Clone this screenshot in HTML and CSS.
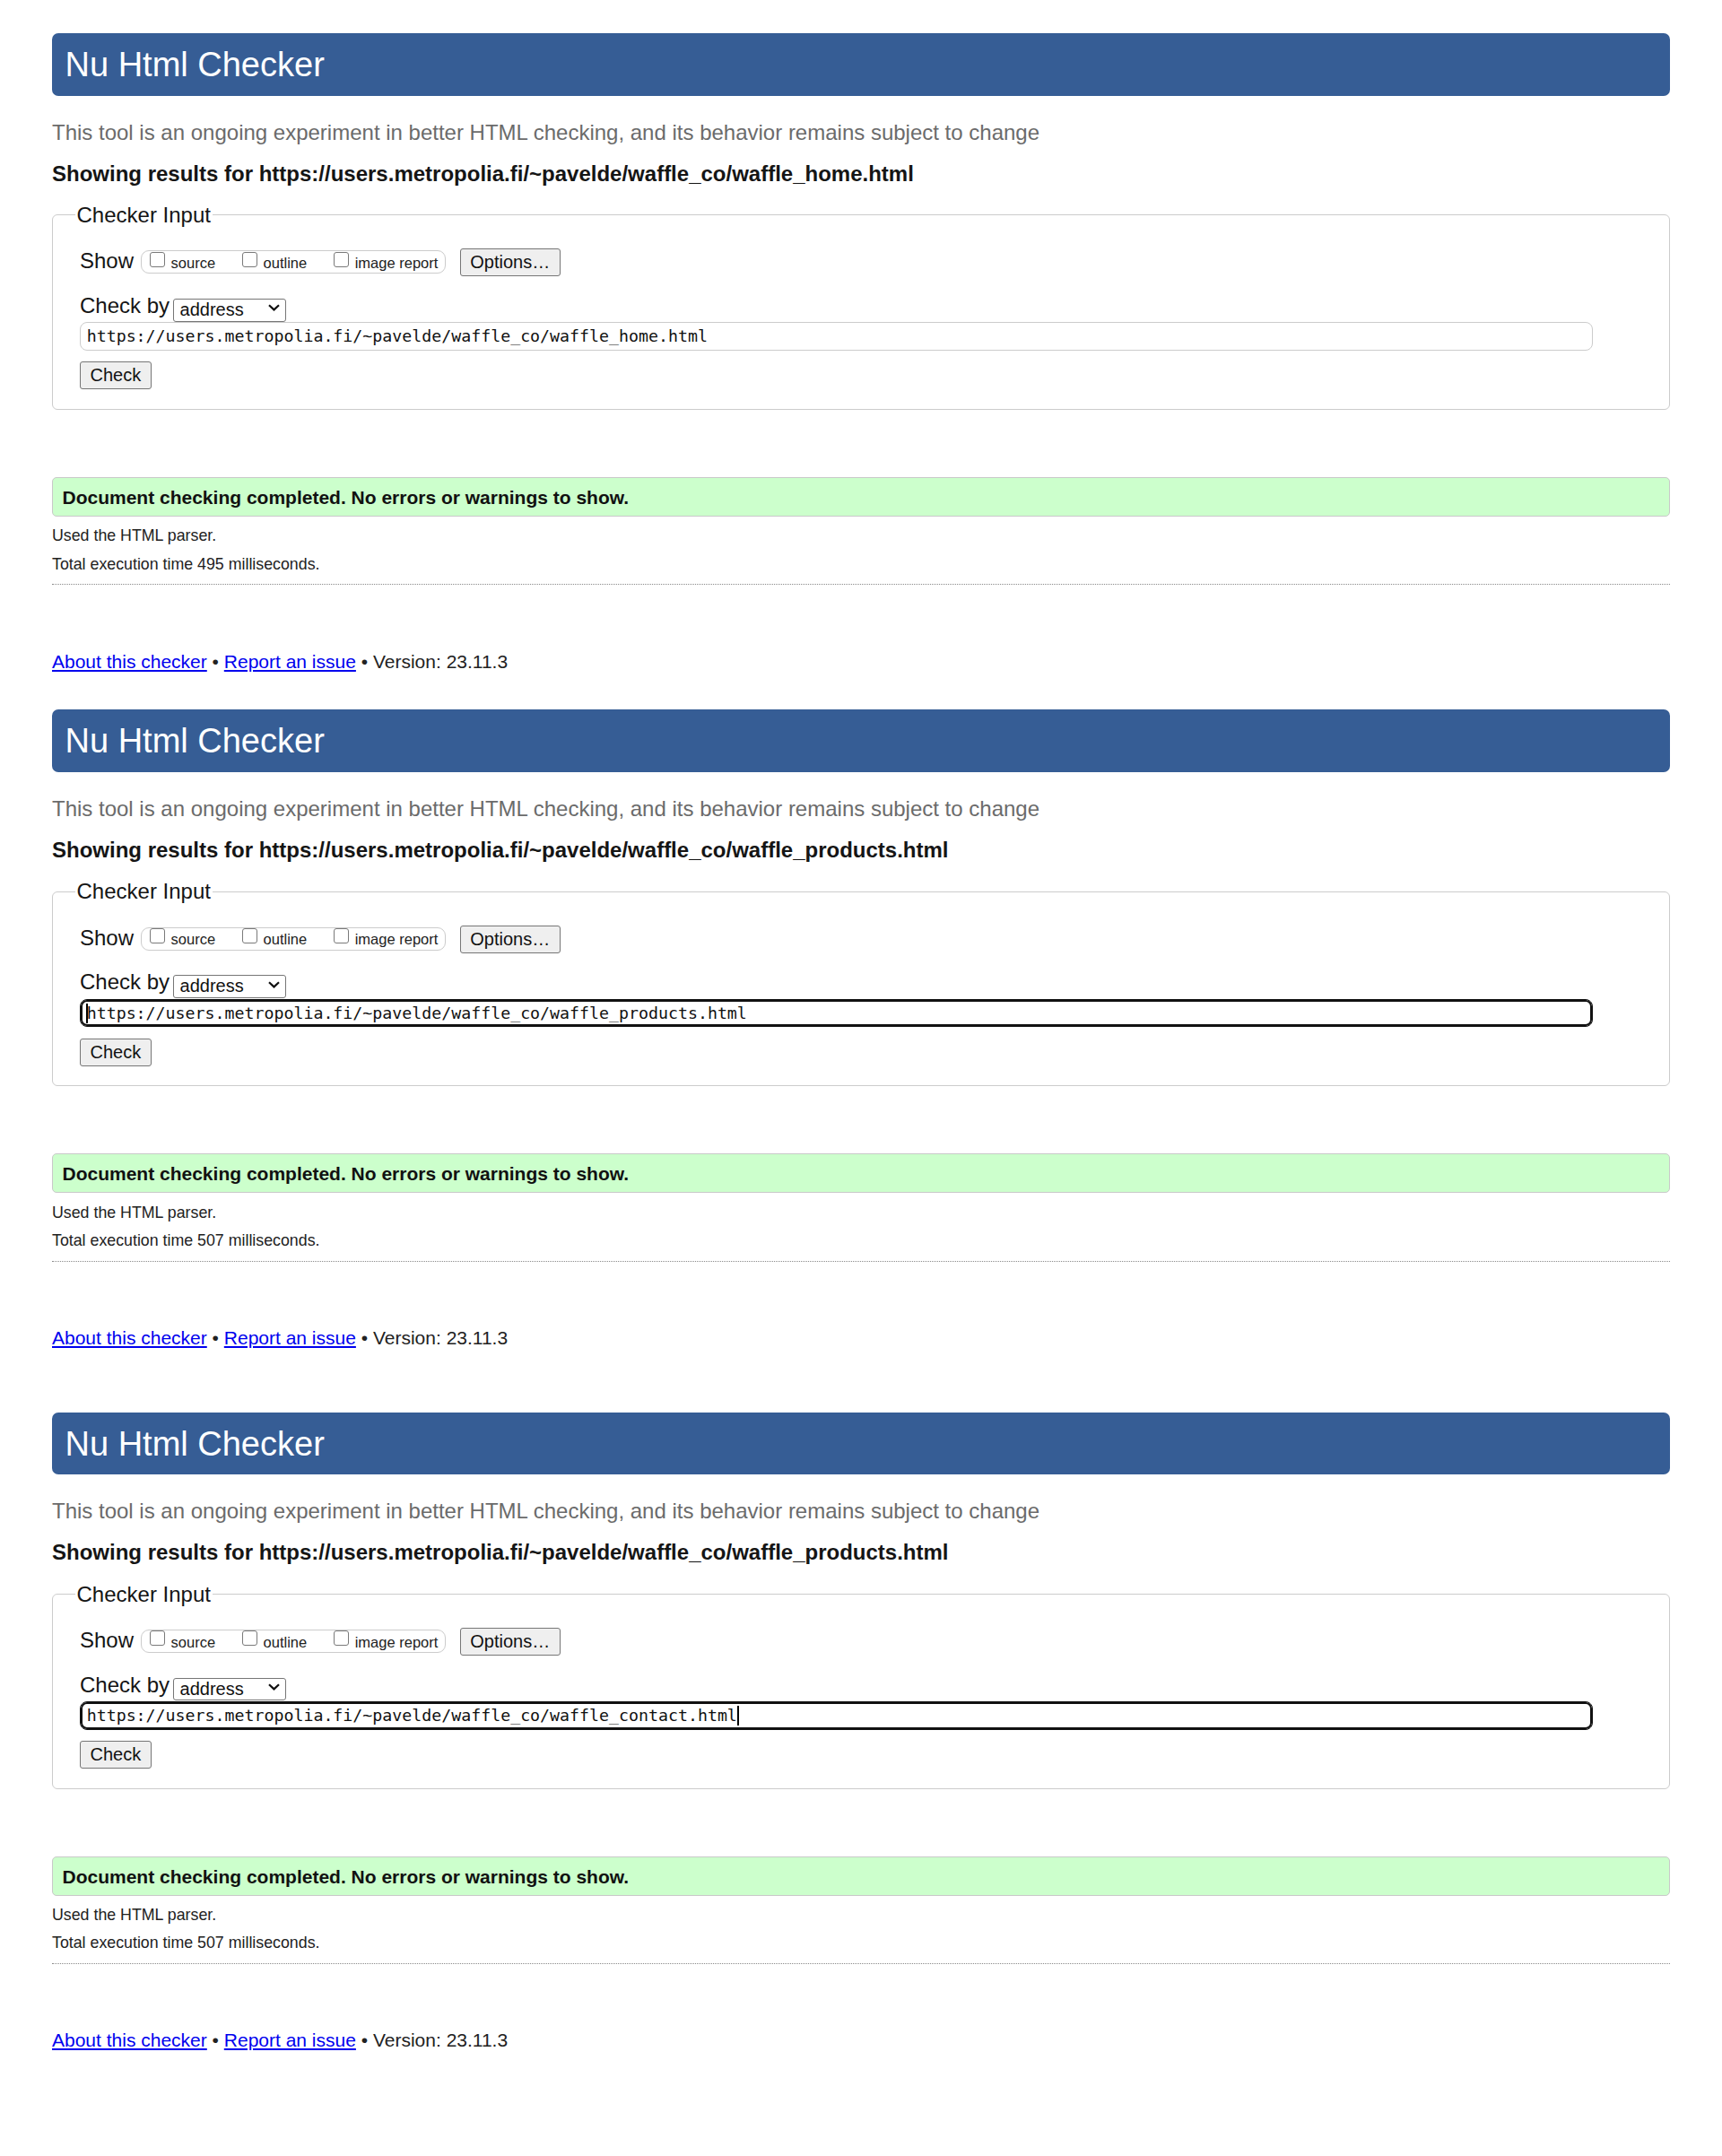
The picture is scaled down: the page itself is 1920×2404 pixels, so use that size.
FILE: index.html
```html
<!DOCTYPE html>
<html lang="en">
<head>
<meta charset="utf-8">
<title>Nu Html Checker</title>
<link rel="stylesheet" href="styles.css">
</head>
<body>

<section class="screen">
  <h1 class="title">Nu Html Checker</h1>
  <p class="tagline">This tool is an ongoing experiment in better HTML checking, and its behavior remains subject to change</p>
  <p class="results">Showing results for https://users.metropolia.fi/~pavelde/waffle_co/waffle_home.html</p>
  <fieldset class="input-box">
    <legend class="legend">Checker Input</legend>
    <div class="show-row">
      <span class="row-label">Show</span>
      <span class="checks">
        <label class="check"><input class="box" type="checkbox"><span class="check-text">source</span></label>
        <label class="check"><input class="box" type="checkbox"><span class="check-text">outline</span></label>
        <label class="check"><input class="box" type="checkbox"><span class="check-text">image report</span></label>
      </span>
      <button class="btn" type="button">Options…</button>
    </div>
    <div class="by-row">
      <span class="row-label">Check by</span>
      <span class="select-wrap"><select class="select"><option>address</option></select><svg class="chevron" width="13" height="8" viewBox="0 0 13 8"><polyline points="1,1.2 6.5,6.4 12,1.2" fill="none" stroke="#111" stroke-width="2.2"/></svg></span>
    </div>
    <div class="url-field"><span class="url-text">https://users.metropolia.fi/~pavelde/waffle_co/waffle_home.html</span></div>
    <button class="btn check-btn" type="button">Check</button>
  </fieldset>
  <p class="success">Document checking completed. No errors or warnings to show.</p>
  <p class="meta">Used the HTML parser.</p>
  <p class="meta meta-second">Total execution time 495 milliseconds.</p>
  <hr class="sep">
  <p class="footer"><a class="link" href="#">About this checker</a> • <a class="link" href="#">Report an issue</a> • Version: 23.11.3</p>
</section>

<section class="screen">
  <h1 class="title">Nu Html Checker</h1>
  <p class="tagline">This tool is an ongoing experiment in better HTML checking, and its behavior remains subject to change</p>
  <p class="results">Showing results for https://users.metropolia.fi/~pavelde/waffle_co/waffle_products.html</p>
  <fieldset class="input-box">
    <legend class="legend">Checker Input</legend>
    <div class="show-row">
      <span class="row-label">Show</span>
      <span class="checks">
        <label class="check"><input class="box" type="checkbox"><span class="check-text">source</span></label>
        <label class="check"><input class="box" type="checkbox"><span class="check-text">outline</span></label>
        <label class="check"><input class="box" type="checkbox"><span class="check-text">image report</span></label>
      </span>
      <button class="btn" type="button">Options…</button>
    </div>
    <div class="by-row">
      <span class="row-label">Check by</span>
      <span class="select-wrap"><select class="select"><option>address</option></select><svg class="chevron" width="13" height="8" viewBox="0 0 13 8"><polyline points="1,1.2 6.5,6.4 12,1.2" fill="none" stroke="#111" stroke-width="2.2"/></svg></span>
    </div>
    <div class="url-field is-focused"><span class="caret caret-start"></span><span class="url-text">https://users.metropolia.fi/~pavelde/waffle_co/waffle_products.html</span></div>
    <button class="btn check-btn" type="button">Check</button>
  </fieldset>
  <p class="success">Document checking completed. No errors or warnings to show.</p>
  <p class="meta">Used the HTML parser.</p>
  <p class="meta meta-second">Total execution time 507 milliseconds.</p>
  <hr class="sep">
  <p class="footer"><a class="link" href="#">About this checker</a> • <a class="link" href="#">Report an issue</a> • Version: 23.11.3</p>
</section>

<section class="screen screen-last">
  <h1 class="title">Nu Html Checker</h1>
  <p class="tagline">This tool is an ongoing experiment in better HTML checking, and its behavior remains subject to change</p>
  <p class="results">Showing results for https://users.metropolia.fi/~pavelde/waffle_co/waffle_products.html</p>
  <fieldset class="input-box">
    <legend class="legend">Checker Input</legend>
    <div class="show-row">
      <span class="row-label">Show</span>
      <span class="checks">
        <label class="check"><input class="box" type="checkbox"><span class="check-text">source</span></label>
        <label class="check"><input class="box" type="checkbox"><span class="check-text">outline</span></label>
        <label class="check"><input class="box" type="checkbox"><span class="check-text">image report</span></label>
      </span>
      <button class="btn" type="button">Options…</button>
    </div>
    <div class="by-row">
      <span class="row-label">Check by</span>
      <span class="select-wrap"><select class="select"><option>address</option></select><svg class="chevron" width="13" height="8" viewBox="0 0 13 8"><polyline points="1,1.2 6.5,6.4 12,1.2" fill="none" stroke="#111" stroke-width="2.2"/></svg></span>
    </div>
    <div class="url-field is-focused"><span class="url-text">https://users.metropolia.fi/~pavelde/waffle_co/waffle_contact.html</span><span class="caret"></span></div>
    <button class="btn check-btn" type="button">Check</button>
  </fieldset>
  <p class="success">Document checking completed. No errors or warnings to show.</p>
  <p class="meta">Used the HTML parser.</p>
  <p class="meta meta-second">Total execution time 507 milliseconds.</p>
  <hr class="sep">
  <p class="footer"><a class="link" href="#">About this checker</a> • <a class="link" href="#">Report an issue</a> • Version: 23.11.3</p>
</section>

</body>
</html>
```

FILE: styles.css
```css
* {
  box-sizing: border-box;
}

html, body {
  background: #ffffff;
}

body {
  margin: 0;
  font-family: "Liberation Sans", Arial, sans-serif;
  font-size: 24px;
  color: #151515;
}

.screen {
  padding: 0 58px 4.7px;
  display: flow-root;
}

.screen-last {
  margin-top: 29px;
}

.title {
  margin: 36.8px 0 0;
  padding: 16.2px 14.5px 15.7px;
  background: #365d95;
  color: #ffffff;
  font-size: 38px;
  font-weight: normal;
  line-height: 38px;
  border-radius: 7px;
}

.tagline {
  margin: 27px 0 0;
  line-height: 28px;
  color: #6b6b6b;
}

.results {
  margin: 18px 0 0;
  line-height: 28px;
  font-weight: bold;
  color: #151515;
}

.input-box {
  margin: 18.3px 0 0;
  padding: 0 30px 21.4px 30px;
  border: 1px solid #cccccc;
  border-radius: 6px;
  min-width: 0;
}

.legend {
  margin-left: -5.5px;
  padding: 0 2px;
  font-size: 24px;
  line-height: 28px;
  color: #151515;
}

.show-row {
  margin-top: 23.3px;
  display: flex;
  align-items: flex-start;
  height: 31px;
}

.row-label {
  line-height: 28px;
  font-size: 24px;
  color: #151515;
}

.checks {
  margin: 2px 0 0 7.7px;
  height: 26px;
  padding: 0 7.4px 0 9.3px;
  border: 1px solid #cccccc;
  border-radius: 9px;
  display: flex;
  align-items: flex-start;
}

.check {
  display: flex;
  align-items: flex-start;
  margin-right: 30px;
}

.check:last-child {
  margin-right: 0;
}

.box {
  appearance: none;
  -webkit-appearance: none;
  margin: 0.4px 6.5px 0 0;
  width: 17px;
  height: 17px;
  border: 1px solid #7a7a7a;
  border-radius: 3px;
  background: #ffffff;
}

.check-text {
  padding-top: 3.8px;
  font-size: 16.5px;
  line-height: 19px;
  color: #222222;
}

.btn {
  font-family: "Liberation Sans", Arial, sans-serif;
  font-size: 20px;
  line-height: 23px;
  height: 31px;
  padding: 3px 10.5px;
  border: 1px solid #767676;
  border-radius: 3px;
  background: #efefef;
  color: #111111;
}

.show-row .btn {
  margin-left: 16px;
}

.by-row {
  margin-top: 21.7px;
  display: flex;
  align-items: flex-start;
  height: 25.7px;
}

.by-row .row-label {
  margin-top: -3px;
}

.select-wrap {
  position: relative;
  margin-left: 4px;
  display: block;
  height: 25.7px;
}

.select {
  appearance: none;
  -webkit-appearance: none;
  width: 126px;
  height: 25.7px;
  margin: 0;
  padding: 0 0 0 6.5px;
  border: 1px solid #767676;
  border-radius: 3px;
  background: #ffffff;
  font-family: "Liberation Sans", Arial, sans-serif;
  font-size: 20px;
  line-height: 23.7px;
  color: #111111;
}

.chevron {
  position: absolute;
  right: 7px;
  top: 9.5px;
  pointer-events: none;
}

.url-field {
  margin-top: 3.8px;
  width: calc(100% - 55.3px);
  height: 31.4px;
  padding: 0 6.7px;
  border: 1px solid #cccccc;
  border-radius: 8px;
  font-family: "DejaVu Sans Mono", "Liberation Mono", monospace;
  font-size: 18.25px;
  line-height: 29.4px;
  color: #111111;
  white-space: nowrap;
  overflow: hidden;
}

.url-field.is-focused {
  border-color: #111111;
  box-shadow: inset 0 0 0 2px #111111;
}

.caret {
  display: inline-block;
  width: 2px;
  height: 22px;
  background: #000000;
  vertical-align: -5.2px;
}

.caret-start {
  margin-left: -1px;
  margin-right: -1px;
}

.check-btn {
  display: block;
  margin-top: 12.6px;
}

.success {
  margin: 75px 0 0;
  height: 44px;
  padding: 2px 10.5px;
  border: 1px solid #c9c9c9;
  border-radius: 5px;
  background: #ccffcc;
  font-size: 21px;
  font-weight: bold;
  line-height: 40px;
  color: #111111;
}

.meta {
  margin: 11.5px 0 0;
  font-size: 17.8px;
  line-height: 20.7px;
  color: #222222;
}

.meta-second {
  margin-top: 10.5px;
}

.sep {
  margin: 12.1px 0 0;
  height: 0;
  border: 0;
  border-top: 1px dotted #8a8a8a;
}

.footer {
  margin: 73.3px 0 0;
  font-size: 21px;
  line-height: 24.1px;
  color: #222222;
}

.link {
  color: #0000ee;
  text-decoration: underline;
}
```
